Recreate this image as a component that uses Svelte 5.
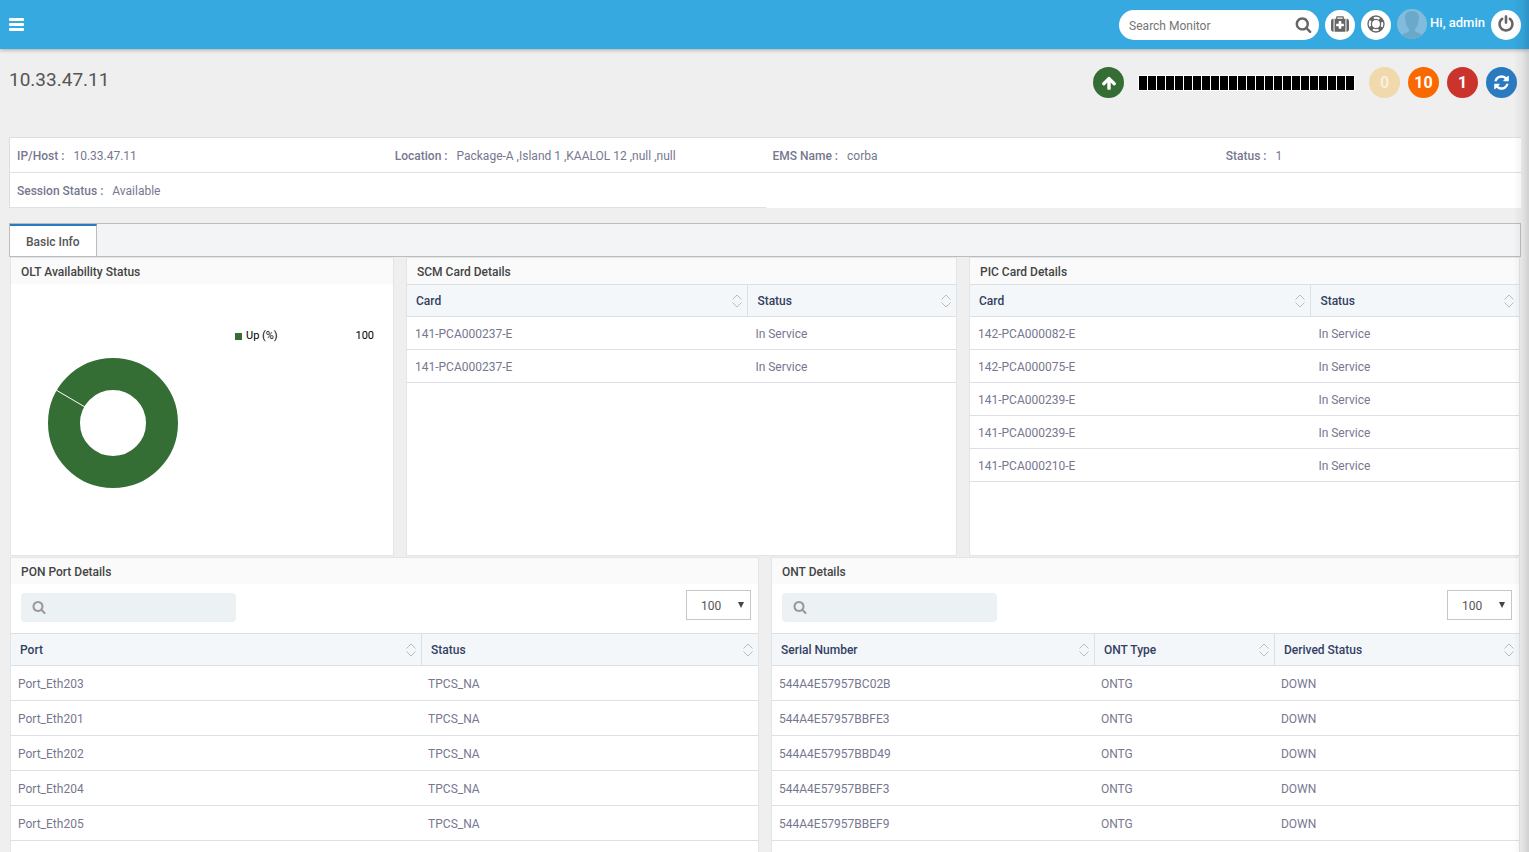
<script lang="ts">
	type Column = { label: string; width: number };
	type Table = { columns: Column[]; rows: string[][] };

	const icons = {
		search:
			'M1216 832q0-185-131.5-316.5t-316.5-131.5-316.5 131.5-131.5 316.5 131.5 316.5 316.5 131.5 316.5-131.5 131.5-316.5zm512 832q0 52-38 90t-90 38q-54 0-90-38l-343-342q-179 124-399 124-143 0-273.5-55.5t-225-150-150-225-55.5-273.5 55.5-273.5 150-225 225-150 273.5-55.5 273.5 55.5 225 150 150 225 55.5 273.5q0 220-124 399l343 343q37 37 37 90z',
		medkit:
			'M1280 1088v-192q0-14-9-23t-23-9h-224v-224q0-14-9-23t-23-9h-192q-14 0-23 9t-9 23v224h-224q-14 0-23 9t-9 23v192q0 14 9 23t23 9h224v224q0 14 9 23t23 9h192q14 0 23-9t9-23v-224h224q14 0 23-9t9-23zm-640-704h512v-128h-512v128zm-384 0v1280h-32q-92 0-158-66t-66-158v-832q0-92 66-158t158-66h32zm1184 0v1280h-1088v-1280h160v-160q0-40 28-68t68-28h576q40 0 68 28t28 68v160h160zm352 224v832q0 92-66 158t-158 66h-32v-1280h32q92 0 158 66t66 158z',
		power:
			'M1664 896q0 156-61 298t-164 245-245 164-298 61-298-61-245-164-164-245-61-298q0-182 80.5-343t226.5-270q43-32 95.5-25t83.5 50q32 42 24.5 94.5t-49.5 84.5q-98 74-151.5 181t-53.5 228q0 104 40.5 198.5t109.5 163.5 163.5 109.5 198.5 40.5 198.5-40.5 163.5-109.5 109.5-163.5 40.5-198.5q0-121-53.5-228t-151.5-181q-42-32-49.5-84.5t24.5-94.5q31-43 84-50t95 25q146 109 226.5 270t80.5 343zm-640-768v640q0 52-38 90t-90 38-90-38-38-90v-640q0-52 38-90t90-38 90 38 38 90z',
		up: 'M1675 971q0 51-37 90l-75 75q-38 38-91 38-54 0-90-38l-294-293v704q0 52-37.5 84.5t-90.5 32.5h-128q-53 0-90.5-32.5t-37.5-84.5v-704l-294 293q-36 38-90 38t-90-38l-75-75q-38-38-38-90 0-53 38-91l651-651q35-37 90-37 54 0 91 37l651 651q37 39 37 91z',
		refresh:
			'M1639 1056q0 5-1 7-64 268-268 434.5t-478 166.5q-146 0-282.5-55t-243.5-157l-129 129q-19 19-45 19t-45-19-19-45v-448q0-26 19-45t45-19h448q26 0 45 19t19 45-19 45l-137 137q71 66 161 102t187 36q134 0 250-65t186-179q11-17 53-117 8-23 30-23h192q13 0 22.5 9.5t9.5 22.5zm25-800v448q0 26-19 45t-45 19h-448q-26 0-45-19t-19-45 19-45l138-138q-148-137-349-137-134 0-250 65t-186 179q-11 17-53 117-8 23-30 23h-199q-13 0-22.5-9.5t-9.5-22.5v-7q65-268 270-434.5t480-166.5q146 0 284 55.5t245 156.5l130-129q19-19 45-19t45 19 19 45z'
	};

	const details = [
		{ label: 'IP/Host', value: '10.33.47.11' },
		{ label: 'Location', value: 'Package-A ,Island 1 ,KAALOL 12 ,null ,null' },
		{ label: 'EMS Name', value: 'corba' },
		{ label: 'Status', value: '1' },
		{ label: 'Session Status', value: 'Available' }
	];

	const cardColumns = [
		{ label: 'Card', width: 62 },
		{ label: 'Status', width: 38 }
	];

	const scm: Table = {
		columns: cardColumns,
		rows: [
			['141-PCA000237-E', 'In Service'],
			['141-PCA000237-E', 'In Service']
		]
	};

	const pic: Table = {
		columns: cardColumns,
		rows: [
			['142-PCA000082-E', 'In Service'],
			['142-PCA000075-E', 'In Service'],
			['141-PCA000239-E', 'In Service'],
			['141-PCA000239-E', 'In Service'],
			['141-PCA000210-E', 'In Service']
		]
	};

	const pon: Table = {
		columns: [
			{ label: 'Port', width: 54.9 },
			{ label: 'Status', width: 45.1 }
		],
		rows: [
			['Port_Eth203', 'TPCS_NA'],
			['Port_Eth201', 'TPCS_NA'],
			['Port_Eth202', 'TPCS_NA'],
			['Port_Eth204', 'TPCS_NA'],
			['Port_Eth205', 'TPCS_NA']
		]
	};

	const ont: Table = {
		columns: [
			{ label: 'Serial Number', width: 43.1 },
			{ label: 'ONT Type', width: 24.1 },
			{ label: 'Derived Status', width: 32.8 }
		],
		rows: [
			['544A4E57957BC02B', 'ONTG', 'DOWN'],
			['544A4E57957BBFE3', 'ONTG', 'DOWN'],
			['544A4E57957BBD49', 'ONTG', 'DOWN'],
			['544A4E57957BBEF3', 'ONTG', 'DOWN'],
			['544A4E57957BBEF9', 'ONTG', 'DOWN']
		]
	};

	const polls = Array.from({ length: 24 }, (_, i) => i);
</script>

{#snippet icon(path: string, size: number)}
	<svg width={size} height={size} viewBox="0 0 1792 1792" aria-hidden="true">
		<path d={path} fill="currentColor" />
	</svg>
{/snippet}

{#snippet dataTable(table: Table, label: string)}
	<table aria-label={label}>
		<colgroup>
			{#each table.columns as col (col.label)}
				<col style="width: {col.width}%" />
			{/each}
		</colgroup>
		<thead>
			<tr>
				{#each table.columns as col (col.label)}
					<th scope="col">
						<button class="sort" type="button">
							{col.label}
							<svg width="10" height="14" viewBox="0 0 10 14" aria-hidden="true">
								<path d="M0.5 5.5L5 1L9.5 5.5M0.5 8.5L5 13L9.5 8.5" />
							</svg>
						</button>
					</th>
				{/each}
			</tr>
		</thead>
		<tbody>
			{#each table.rows as row}
				<tr>
					{#each row as cell}
						<td>{cell}</td>
					{/each}
				</tr>
			{/each}
		</tbody>
	</table>
{/snippet}

{#snippet toolbar(name: string)}
	<div class="toolbar">
		<label class="filter">
			{@render icon(icons.search, 14)}
			<input type="text" aria-label="Filter {name}" />
		</label>
		<div class="page-size">
			<select aria-label="{name} per page">
				<option>100</option>
			</select>
			<span class="caret"></span>
		</div>
	</div>
{/snippet}

<div class="page">
	<header class="topbar">
		<button class="menu" type="button" aria-label="Menu">
			<span></span>
			<span></span>
			<span></span>
		</button>
		<div class="tools">
			<div class="search">
				<input type="text" placeholder="Search Monitor" aria-label="Search Monitor" />
				<button type="button" aria-label="Search">{@render icon(icons.search, 17)}</button>
			</div>
			<button class="round" type="button" aria-label="Diagnostics">
				{@render icon(icons.medkit, 18)}
			</button>
			<button class="round" type="button" aria-label="Help">
				<svg width="18" height="18" viewBox="0 0 18 18" fill="none" stroke="currentColor" aria-hidden="true">
					<circle cx="9" cy="9" r="8" stroke-width="1.3" />
					<circle cx="9" cy="9" r="4.6" stroke-width="1.3" />
					<circle cx="9" cy="9" r="6.3" stroke-width="3.6" stroke-dasharray="4 5.9" stroke-dashoffset="-2.95" />
				</svg>
			</button>
			<a class="user" href="#profile">
				<svg width="30" height="30" viewBox="0 0 30 30" aria-hidden="true">
					<circle cx="15" cy="15" r="15" fill="#82bcdc" />
					<path
						d="M15 2c-5 0-7 3-7 7 0 3 1 4 1 6 1 3 2 4 3 5v2c-2 2-5 2-7 4a15 15 0 0 0 20 0c-2-2-5-2-7-4v-2c1-1 2-2 3-5 0-2 1-3 1-6 0-4-2-7-7-7z"
						fill="#6ba9cb"
					/>
				</svg>
				<span>Hi, admin</span>
			</a>
			<button class="round" type="button" aria-label="Log out">
				{@render icon(icons.power, 18)}
			</button>
		</div>
	</header>

	<main>
		<div class="heading">
			<h1>10.33.47.11</h1>
			<div class="health">
				<span class="badge up">{@render icon(icons.up, 16)}</span>
				<div class="polls">
					{#each polls as poll (poll)}
						<span></span>
					{/each}
				</div>
				<div class="alarms">
					<span class="badge minor"><span>0</span></span>
					<span class="badge major">10</span>
					<span class="badge critical">1</span>
					<button class="badge refresh" type="button" aria-label="Refresh">
						{@render icon(icons.refresh, 17)}
					</button>
				</div>
			</div>
		</div>

		<dl class="details">
			{#each details as item (item.label)}
				<div>
					<dt>{item.label} :</dt>
					<dd>{item.value}</dd>
				</div>
			{/each}
			<div></div>
		</dl>

		<nav class="tabs">
			<button class="tab" type="button">Basic Info</button>
		</nav>

		<div class="row cards">
			<section class="panel">
				<h2>OLT Availability Status</h2>
				<div class="chart">
					<svg width="132" height="132" viewBox="0 0 132 132" role="img" aria-label="Up 100%">
						<circle cx="66" cy="66" r="49" fill="none" stroke="#356e35" stroke-width="32" />
						<path d="M9 33L38 50" stroke="#fff" />
					</svg>
					<div class="legend">
						<span class="swatch"></span>
						<span>Up (%)</span>
						<span class="amount">100</span>
					</div>
				</div>
			</section>
			<section class="panel">
				<h2>SCM Card Details</h2>
				{@render dataTable(scm, 'SCM Card Details')}
			</section>
			<section class="panel">
				<h2>PIC Card Details</h2>
				{@render dataTable(pic, 'PIC Card Details')}
			</section>
		</div>

		<div class="row ports">
			<section class="panel">
				<h2>PON Port Details</h2>
				{@render toolbar('ports')}
				{@render dataTable(pon, 'PON Port Details')}
			</section>
			<section class="panel">
				<h2>ONT Details</h2>
				{@render toolbar('ONTs')}
				{@render dataTable(ont, 'ONT Details')}
			</section>
		</div>
	</main>
	<div class="edge"></div>
</div>

<style>
	:global(body) {
		margin: 0;
		background: #efefef;
	}
	.page {
		display: flex;
		flex-direction: column;
		min-height: 100vh;
		font-family: Roboto, 'Liberation Sans', sans-serif;
		font-size: 12px;
		line-height: 16px;
		color: #77778f;
	}
	.page *,
	.page {
		box-sizing: border-box;
	}
	button,
	input,
	select {
		font: inherit;
		color: inherit;
		margin: 0;
		padding: 0;
		border: 0;
		background: none;
	}
	svg {
		display: block;
		flex: none;
	}

	.topbar {
		display: flex;
		justify-content: space-between;
		align-items: center;
		height: 49px;
		padding: 0 8px 0 9px;
		background: #36a9e1;
		box-shadow: 0 1px 4px rgba(0, 0, 0, 0.3);
	}
	.menu {
		display: grid;
		gap: 2px;
	}
	.menu span {
		width: 15px;
		height: 3px;
		border-radius: 1px;
		background: #fff;
	}
	.tools {
		display: flex;
		align-items: center;
		gap: 6px;
	}
	.search {
		display: flex;
		align-items: center;
		width: 200px;
		height: 30px;
		padding: 0 7px 0 10px;
		border-radius: 15px;
		background: #fff;
		color: #666;
	}
	.search input {
		flex: 1;
		min-width: 0;
		padding-top: 2px;
		outline: 0;
	}
	.search input::placeholder {
		color: #757575;
		opacity: 1;
	}
	.round {
		display: grid;
		place-items: center;
		width: 30px;
		height: 30px;
		padding-bottom: 2px;
		border-radius: 50%;
		background: #fff;
		color: #666;
	}
	.user {
		display: flex;
		gap: 3px;
		height: 32px;
		color: #fff;
		font-size: 13px;
		font-weight: 500;
		line-height: 28px;
		text-decoration: none;
	}

	main {
		display: flex;
		flex-direction: column;
		flex: 1;
		padding: 18px 8px 0 9px;
	}
	.heading {
		display: flex;
		justify-content: space-between;
		height: 70px;
		padding-right: 4px;
	}
	h1 {
		margin: 0;
		font-size: 19px;
		font-weight: 400;
		line-height: 26px;
		color: #555;
	}
	.health {
		display: flex;
		align-items: center;
		gap: 14px;
		height: 31px;
	}
	.polls {
		display: flex;
		gap: 1px;
		padding: 1px;
		background: #fff;
	}
	.polls span {
		width: 8px;
		height: 14px;
		background: #000;
	}
	.alarms {
		display: flex;
		gap: 8px;
	}
	.badge {
		display: grid;
		place-items: center;
		width: 31px;
		height: 31px;
		border-radius: 50%;
		color: #fff;
		font-size: 16px;
		font-weight: 700;
	}
	.up {
		background: #356e35;
	}
	.minor {
		background: #f0d9ab;
	}
	.minor span {
		opacity: 0.6;
	}
	.major {
		background: #fa6900;
	}
	.critical {
		background: #cb342d;
	}
	.refresh {
		background: #2a7abf;
	}

	.details {
		display: grid;
		grid-template-columns: 5fr 5fr 6fr 4fr;
		margin: 0 0 15px;
		border-top: 1px solid #dcdfe0;
		border-left: 1px solid #dcdfe0;
		background: #fff;
	}
	.details div {
		display: flex;
		gap: 9px;
		height: 35px;
		padding: 10px 7px 0;
		border-bottom: 1px solid #dce1e3;
	}
	dt {
		font-weight: 500;
	}
	dd {
		margin: 0;
	}

	.tabs {
		display: flex;
		height: 34px;
		border: 1px solid #bbbcbe;
		background: #f3f4f6;
	}
	.tab {
		padding: 2px 16px 0;
		border-top: 2px solid #2a7abf;
		border-right: 1px solid #bbbcbe;
		background: #fff;
		color: #555;
		font-weight: 500;
	}

	.row {
		display: grid;
		gap: 12px;
		margin: 0 1px;
	}
	.cards {
		grid-template-columns: 384fr 551fr 551fr;
		min-height: 299px;
		margin-bottom: 1px;
	}
	.ports {
		flex: 1;
		grid-template-columns: 1fr 1fr;
	}
	.ports .panel {
		border-bottom: 0;
	}
	.panel {
		min-width: 0;
		border: 1px solid #e2e5e7;
		background: #fff;
	}
	h2 {
		margin: 0;
		padding: 6px 10px 4px;
		background: #fafafa;
		color: #444;
		font-size: 12px;
		font-weight: 500;
		line-height: 16px;
	}

	.chart {
		display: flex;
		justify-content: space-between;
		padding: 44px 19px 0 36px;
	}
	.chart > svg {
		margin-top: 29px;
	}
	.legend {
		display: flex;
		align-items: center;
		gap: 4px;
		width: 139px;
		height: 16px;
		font-size: 11px;
		color: #000;
	}
	.swatch {
		width: 7px;
		height: 7px;
		background: #356e35;
	}
	.amount {
		margin-left: auto;
	}

	table {
		width: 100%;
		table-layout: fixed;
		border-collapse: separate;
		border-spacing: 0;
	}
	th {
		height: 33px;
		padding: 0;
		border-top: 1px solid #dbe0e4;
		border-bottom: 1px solid #dbe0e4;
		background: #f3f7fa;
	}
	th + th {
		border-left: 1px solid #dbe0e4;
	}
	.sort {
		display: flex;
		justify-content: space-between;
		align-items: center;
		width: 100%;
		padding: 0 5px 0 9px;
		color: #343f63;
		font-weight: 500;
	}
	.sort svg {
		fill: none;
		stroke: #bbb;
	}
	td {
		height: 33px;
		padding: 2px 8px 0;
		border-bottom: 1px solid #dbe0e4;
	}
	.ports td {
		height: 35px;
		padding: 2px 8px 0 7px;
	}

	.toolbar {
		display: flex;
		justify-content: space-between;
		align-items: flex-start;
		height: 49px;
		padding: 6px 7px 0 10px;
	}
	.filter {
		display: flex;
		align-items: center;
		gap: 8px;
		width: 215px;
		height: 29px;
		margin-top: 3px;
		padding: 0 10px 2px 11px;
		border-radius: 4px;
		background: #ecf1f4;
		color: #999;
	}
	.filter input {
		flex: 1;
		min-width: 0;
		outline: 0;
	}
	.page-size {
		position: relative;
	}
	.page-size select {
		appearance: none;
		width: 65px;
		height: 30px;
		padding: 2px 14px 0;
		border: 1px solid #c6c6c6;
		background: #fff;
		color: #555;
	}
	.caret {
		position: absolute;
		top: 12px;
		right: 7px;
		border: 3px solid transparent;
		border-top: 6px solid #444;
		border-bottom: 0;
		pointer-events: none;
	}

	.edge {
		position: fixed;
		top: 0;
		right: 0;
		bottom: 0;
		width: 14px;
		background: linear-gradient(to right, rgba(0, 0, 0, 0.01), rgba(0, 0, 0, 0.04) 50%, rgba(0, 0, 0, 0.13));
		pointer-events: none;
	}
</style>
